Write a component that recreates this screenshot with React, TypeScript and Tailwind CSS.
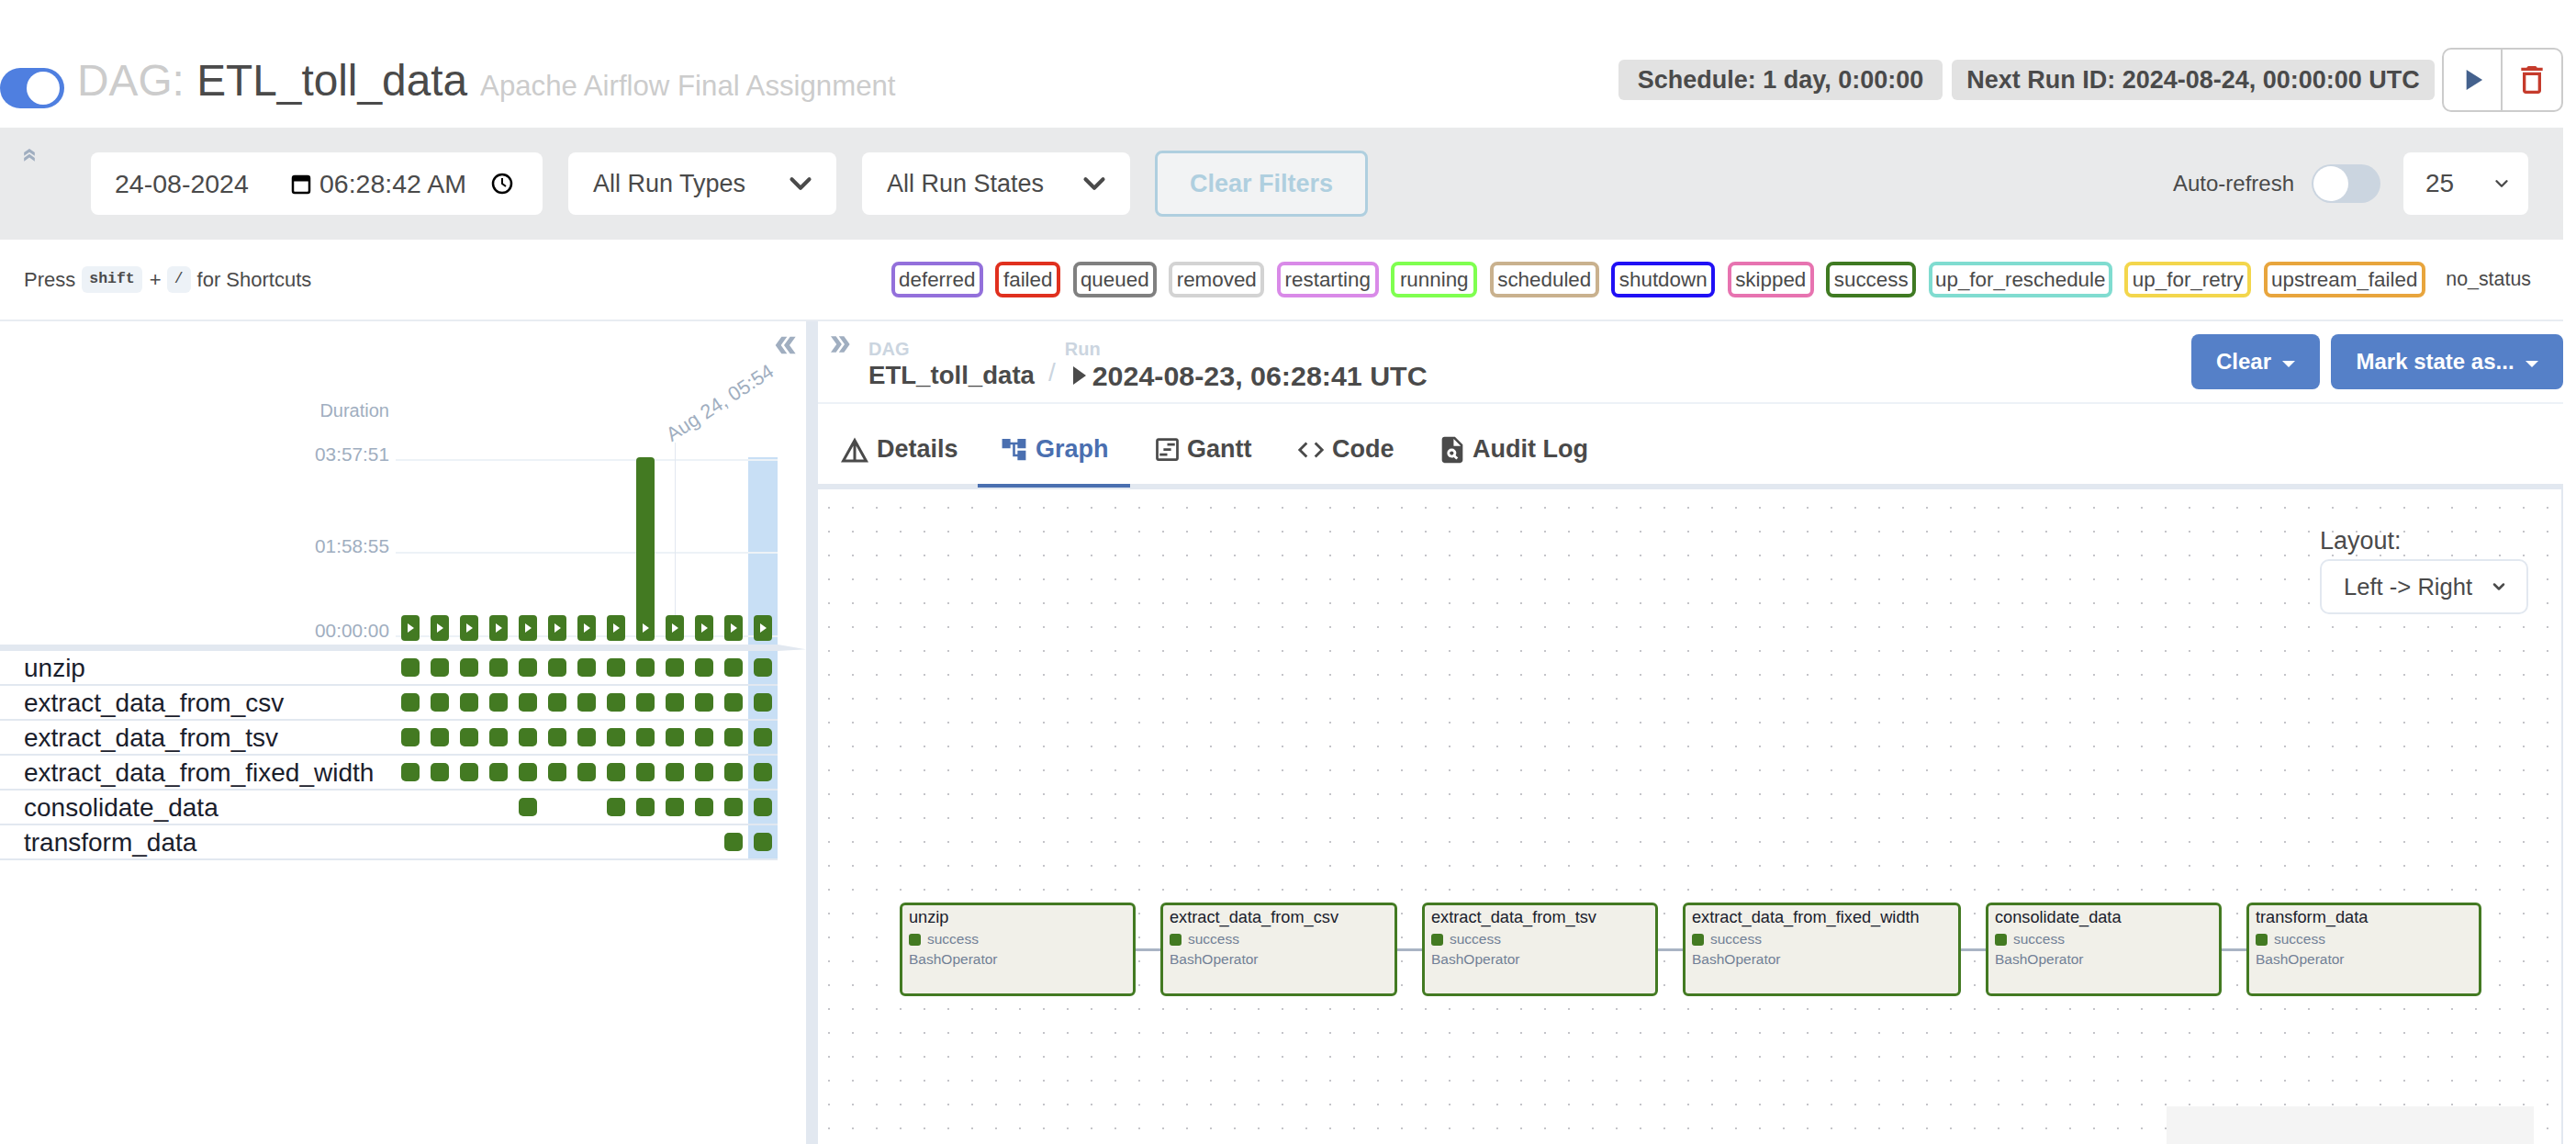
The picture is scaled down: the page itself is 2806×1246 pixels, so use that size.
import { MdAccountTree, MdCode, MdDetails, MdDoubleArrow, MdOutlineDelete, MdOutlineViewTimeline, MdPlagiarism, MdPlayArrow } from 'react-icons/md';
import { FiChevronDown } from 'react-icons/fi';

const legend = [
    { name: 'deferred', box: 'w-[100px] border-[#9370db]' },
    { name: 'failed', box: 'w-[71px] border-[#e0301e]' },
    { name: 'queued', box: 'w-[91px] border-[#808080]' },
    { name: 'removed', box: 'w-[104px] border-[#d3d3d3]' },
    { name: 'restarting', box: 'w-[111px] border-[#d98ae8]' },
    { name: 'running', box: 'w-[94px] border-[#7fff50]' },
    { name: 'scheduled', box: 'w-[119px] border-[#c9b18e]' },
    { name: 'shutdown', box: 'w-[113px] border-[#2010f5]' },
    { name: 'skipped', box: 'w-[94px] border-[#e773b0]' },
    { name: 'success', box: 'w-[98px] border-[#3f7a22]' },
    { name: 'up_for_reschedule', box: 'w-[200px] border-[#80dcd0]' },
    { name: 'up_for_retry', box: 'w-[138px] border-[#f3d64c]' },
    { name: 'upstream_failed', box: 'w-[176px] border-[#e8a53d]' },
];

const tasks = [
    { name: 'unzip', runs: [0, 1, 2, 3, 4, 5, 6, 7, 8, 9, 10, 11, 12] },
    { name: 'extract_data_from_csv', runs: [0, 1, 2, 3, 4, 5, 6, 7, 8, 9, 10, 11, 12] },
    { name: 'extract_data_from_tsv', runs: [0, 1, 2, 3, 4, 5, 6, 7, 8, 9, 10, 11, 12] },
    { name: 'extract_data_from_fixed_width', runs: [0, 1, 2, 3, 4, 5, 6, 7, 8, 9, 10, 11, 12] },
    { name: 'consolidate_data', runs: [4, 7, 8, 9, 10, 11, 12] },
    { name: 'transform_data', runs: [11, 12] },
];

const nodes = [
    { name: 'unzip', width: 'w-[257px]' },
    { name: 'extract_data_from_csv', width: 'w-[258px]' },
    { name: 'extract_data_from_tsv', width: 'w-[257px]' },
    { name: 'extract_data_from_fixed_width', width: 'w-[303px]' },
    { name: 'consolidate_data', width: 'w-[257px]' },
    { name: 'transform_data', width: 'w-[256px]' },
];

const columns = [0, 1, 2, 3, 4, 5, 6, 7, 8, 9, 10, 11, 12];

const tabs = [
    { label: 'Details', icon: <MdDetails size={36} />, box: 'w-[174px] pl-[22px] gap-[6px]' },
    { label: 'Graph', icon: <MdAccountTree size={31} />, box: 'w-[166px] pl-[24px] gap-[8px]', active: true },
    { label: 'Gantt', icon: <MdOutlineViewTimeline size={33} />, box: 'w-[158px] pl-[24px] gap-[5px]' },
    { label: 'Code', icon: <MdCode size={34} />, box: 'w-[155px] pl-[22px] gap-[6px]' },
    { label: 'Audit Log', icon: <MdPlagiarism size={34} />, box: 'w-[190px] pl-[21px] gap-[5px]' },
];

const RunBar = ({ tall }: { tall: boolean }) => (
    <div className={`flex w-5 items-end justify-center rounded-[4px] bg-[#437a22] pb-[9px] ${tall ? 'h-[200px]' : 'h-[28px]'}`}>
        <svg width="7" height="10" viewBox="0 0 7 10">
            <polygon points="0,0 7,5 0,10" fill="#ffffff" />
        </svg>
    </div>
);

const App = () => {
    return (
        <div className="h-[1246px] w-[2792px] overflow-hidden bg-white font-['Liberation_Sans',sans-serif] text-[#4a4a4a]">
            <header className="flex h-[139px] items-center pt-[35px]">
                <div className="mt-[18px] flex h-[44px] w-[70px] items-center justify-end rounded-full bg-[#4f7fe0] pr-[5px]">
                    <div className="h-[36px] w-[36px] rounded-full bg-white" />
                </div>
                <div className="ml-[14px] mt-[2px] flex items-baseline">
                    <h1 className="text-[47.8px] leading-none">
                        <span className="text-[#cccccc]">DAG:</span> ETL_toll_data
                    </h1>
                    <span className="ml-[14px] text-[31.2px] leading-none text-[#cccccc]">Apache Airflow Final Assignment</span>
                </div>
                <div className="ml-auto flex items-center">
                    <span className="flex h-[44px] w-[353px] items-center justify-center rounded-[6px] bg-[#e2e2e2] text-[27px] font-bold">Schedule: 1 day, 0:00:00</span>
                    <span className="ml-[10px] flex h-[44px] w-[526px] items-center justify-center rounded-[6px] bg-[#e2e2e2] text-[27px] font-bold">Next Run ID: 2024-08-24, 00:00:00 UTC</span>
                    <div className="ml-[8px] flex h-[70px] w-[132px] rounded-[10px] border-2 border-[#cccccc]">
                        <div className="flex w-[64px] items-center justify-center border-r-2 border-[#cccccc] text-[#44618d]">
                            <MdPlayArrow size={38} />
                        </div>
                        <div className="flex flex-1 items-center justify-center text-[#c53b2c]">
                            <MdOutlineDelete size={40} />
                        </div>
                    </div>
                </div>
            </header>

            <section className="flex h-[122px] items-center bg-[#e9eaeb] pr-[38px]">
                <div className="w-[99px] self-start pl-[22px] pt-[20px] text-[#a0aec0]">
                    <MdDoubleArrow size={20} className="-rotate-90" />
                </div>
                <div className="flex h-[68px] w-[492px] items-center rounded-[8px] bg-white pl-[26px] text-[28.5px]">
                    <span className="w-[191px]">24-08-2024</span>
                    <svg width="24" height="24" viewBox="0 0 24 24" fill="none" stroke="#000000" strokeWidth="2.5">
                        <rect x="3" y="4" width="18" height="18" rx="2" />
                        <path d="M3 7h18" strokeWidth="5" />
                    </svg>
                    <span className="ml-[8px] w-[187px]">06:28:42 AM</span>
                    <svg width="24" height="24" viewBox="0 0 24 24" fill="none" stroke="#000000" strokeWidth="2.5">
                        <circle cx="12" cy="12" r="10" />
                        <path d="M12 6v6l4 3" strokeWidth="2" />
                    </svg>
                </div>
                <div className="ml-[28px] flex h-[68px] w-[292px] items-center justify-between rounded-[8px] bg-white pl-[27px] pr-[20px] text-[27px]">
                    All Run Types
                    <FiChevronDown size={38} strokeWidth={2.6} />
                </div>
                <div className="ml-[28px] flex h-[68px] w-[292px] items-center justify-between rounded-[8px] bg-white pl-[27px] pr-[20px] text-[27px]">
                    All Run States
                    <FiChevronDown size={38} strokeWidth={2.6} />
                </div>
                <div className="ml-[27px] flex h-[72px] w-[232px] items-center justify-center rounded-[8px] border-[3px] border-[#afcfdf] bg-[#f2f3f4] text-[27px] font-bold text-[#afcfdf]">
                    Clear Filters
                </div>
                <span className="ml-auto text-[24px]">Auto-refresh</span>
                <div className="ml-[19px] flex h-[42px] w-[75px] items-center rounded-full bg-[#cbd5e0] pl-[2px]">
                    <div className="h-[38px] w-[38px] rounded-full bg-white" />
                </div>
                <div className="ml-[25px] flex h-[68px] w-[136px] items-center justify-between rounded-[8px] bg-white pl-[24px] pr-[18px] text-[28px]">
                    25
                    <FiChevronDown size={22} strokeWidth={2.6} />
                </div>
            </section>

            <section className="flex h-[89px] items-center border-b-[2px] border-[#e8ecf2] pl-[26px] pr-[35px] text-[22.4px]">
                <span className="text-[22px]">Press</span>
                <kbd className="ml-[7px] rounded-[6px] bg-[#edf2f7] px-[8px] py-[2px] font-['Liberation_Mono',monospace] text-[16.5px] font-bold">shift</kbd>
                <span className="ml-[8px] text-[22px]">+</span>
                <kbd className="ml-[6px] rounded-[6px] bg-[#edf2f7] px-[8px] py-[2px] font-['Liberation_Mono',monospace] text-[16.5px]">/</kbd>
                <span className="ml-[7px] text-[22px]">for Shortcuts</span>
                <div className="ml-auto flex items-center gap-[13.5px]">
                    {legend.map((item) => (
                        <span key={item.name} className={`flex h-[39px] items-center justify-center rounded-[8px] border-[4px] ${item.box}`}>
                            {item.name}
                        </span>
                    ))}
                    <span className="ml-[9px] text-[21.4px]">no_status</span>
                </div>
            </section>

            <div className="flex h-[896px]">
                <aside className="relative w-[878px] shrink-0">
                    <div className="absolute left-[815px] top-[148px] h-[439px] w-[32px] bg-[#c8dff5]" />
                    <div className="relative h-[352px]">
                        <button type="button" className="absolute left-[840px] top-[10px] rotate-180 text-[#a0aec0]">
                            <MdDoubleArrow size={32} />
                        </button>
                        <span className="absolute right-[454px] top-[85px] text-[20px] leading-[24px] text-[#a0aec0]">Duration</span>
                        <span className="absolute right-[454px] top-[133px] text-[20.8px] leading-[24px] text-[#a0aec0]">03:57:51</span>
                        <span className="absolute right-[454px] top-[233px] text-[20.8px] leading-[24px] text-[#a0aec0]">01:58:55</span>
                        <span className="absolute right-[454px] top-[325px] text-[20.8px] leading-[24px] text-[#a0aec0]">00:00:00</span>
                        <div className="absolute left-[431px] top-[150px] h-[2px] w-[416px] bg-[#edf2f7]" />
                        <div className="absolute left-[431px] top-[251px] h-[2px] w-[416px] bg-[#edf2f7]" />
                        <div className="absolute left-[431px] top-[342px] h-[2px] w-[416px] bg-[#edf2f7]" />
                        <div className="absolute left-[735px] top-[132px] h-[190px] w-[1px] bg-[#e2e8f0]" />
                        <span className="absolute left-[717px] top-[77px] origin-center -rotate-[33deg] whitespace-nowrap text-[21.6px] leading-[24px] text-[#a0aec0]">Aug 24, 05:54</span>
                        <div className="absolute bottom-[4px] left-[437px] flex items-end gap-[12px]">
                            {columns.map((col) => (
                                <RunBar key={col} tall={col === 8} />
                            ))}
                        </div>
                    </div>
                    <div className="relative h-[7px] bg-[#e2e8f0] [clip-path:polygon(0_0,96.5%_0,100%_75%,96.5%_100%,0_100%)]" />
                    <div className="relative w-[847px]">
                        {tasks.map((task) => (
                            <div key={task.name} className="flex h-[38px] items-center border-b-2 border-[#e2e8f0] text-[28px] text-[#1a202c]">
                                <span className="w-[437px] pl-[26px] pt-[1px]">{task.name}</span>
                                <div className="flex gap-[12px]">
                                    {columns.map((col) => (
                                        <div key={col} className={`h-5 w-5 rounded-[5px] ${task.runs.includes(col) ? 'bg-[#437a22]' : ''}`} />
                                    ))}
                                </div>
                            </div>
                        ))}
                    </div>
                </aside>

                <div className="w-[13px] shrink-0 bg-[#e2e8f0]" />

                <main className="flex w-[1901px] shrink-0 flex-col">
                    <div className="relative flex h-[90px] shrink-0 items-start border-b-2 border-[#edf2f7] pl-[55px]">
                        <MdDoubleArrow size={30} className="absolute left-[9px] top-[10px] text-[#a0aec0]" />
                        <div className="pt-[18px]">
                            <div className="text-[20px] font-bold leading-[24px] text-[#cbd5e0]">DAG</div>
                            <div className="mt-[1px] text-[27.6px] font-bold leading-[32px]">ETL_toll_data</div>
                        </div>
                        <span className="ml-[15px] mt-[40px] text-[28px] leading-[32px] text-[#cbd5e0]">/</span>
                        <div className="ml-[10px] pt-[18px]">
                            <div className="text-[20px] font-bold leading-[24px] text-[#cbd5e0]">Run</div>
                            <div className="ml-[9px] mt-[1px] flex items-center text-[30.4px] font-bold leading-[32px]">
                                <svg width="14" height="20" viewBox="0 0 14 20" className="mr-[7px]">
                                    <polygon points="0,0 14,10 0,20" fill="#4a4a4a" />
                                </svg>
                                2024-08-23, 06:28:41 UTC
                            </div>
                        </div>
                        <div className="ml-auto flex gap-[12px] pt-[14px]">
                            <button type="button" className="flex h-[60px] w-[140px] items-center justify-center rounded-[8px] bg-[#5580c8] text-[24px] font-bold text-white">
                                Clear
                                <span className="ml-[12px] mt-[4px] border-x-[7px] border-t-[7px] border-x-transparent border-t-white" />
                            </button>
                            <button type="button" className="flex h-[60px] w-[253px] items-center justify-center rounded-[8px] bg-[#5580c8] text-[24px] font-bold text-white">
                                Mark state as...
                                <span className="ml-[12px] mt-[4px] border-x-[7px] border-t-[7px] border-x-transparent border-t-white" />
                            </button>
                        </div>
                    </div>

                    <nav className="flex h-[93px] shrink-0 border-b-[6px] border-[#e2e8f0] text-[27px] font-bold">
                        {tabs.map((tab) => (
                            <div
                                key={tab.label}
                                className={`-mb-[4px] flex items-center border-b-4 pt-[12px] ${tab.box} ${tab.active ? 'border-[#4a6fb0] text-[#4a6fb0]' : 'border-transparent'}`}
                            >
                                {tab.icon}
                                {tab.label}
                            </div>
                        ))}
                    </nav>

                    <div className="relative flex-1 border-r-2 border-[#e2e8f0] bg-[radial-gradient(#c4c4c9_1px,transparent_1px)] bg-[size:26px_26px] bg-[position:-1px_7px]">
                        <div className="absolute left-[1636px] top-[38px]">
                            <div className="text-[27px] leading-[36px]">Layout:</div>
                            <div className="mt-[2px] flex h-[60px] w-[227px] items-center justify-between rounded-[10px] border-2 border-[#e2e8f0] bg-white pl-[24px] pr-[20px] text-[25.6px]">
                                {'Left -> Right'}
                                <FiChevronDown size={20} strokeWidth={3} />
                            </div>
                        </div>

                        <div className="absolute left-[89px] top-[450px] flex items-center">
                            {nodes.map((node, index) => (
                                <div key={node.name} className="flex items-center">
                                    {index > 0 && <div className="h-[3px] w-[27px] bg-[#a9b4c4]" />}
                                    <div className={`h-[102px] rounded-[6px] border-[3px] border-[#437a22] bg-[#f1f0e9] pl-[7px] pt-[1px] ${node.width}`}>
                                        <div className="text-[18.2px] leading-[24px] text-[#1a202c]">{node.name}</div>
                                        <div className="mt-[2px] flex items-center gap-[7px] text-[15.5px] leading-[20px] text-[#718096]">
                                            <span className="h-[13px] w-[13px] rounded-[3px] bg-[#437a22]" />
                                            success
                                        </div>
                                        <div className="mt-[2px] text-[15.5px] leading-[20px] text-[#718096]">BashOperator</div>
                                    </div>
                                </div>
                            ))}
                        </div>

                        <div className="absolute bottom-0 left-[1469px] top-[672px] w-[400px] bg-[#f4f4f4]" />
                    </div>
                </main>
            </div>
        </div>
    );
};

export default App;
